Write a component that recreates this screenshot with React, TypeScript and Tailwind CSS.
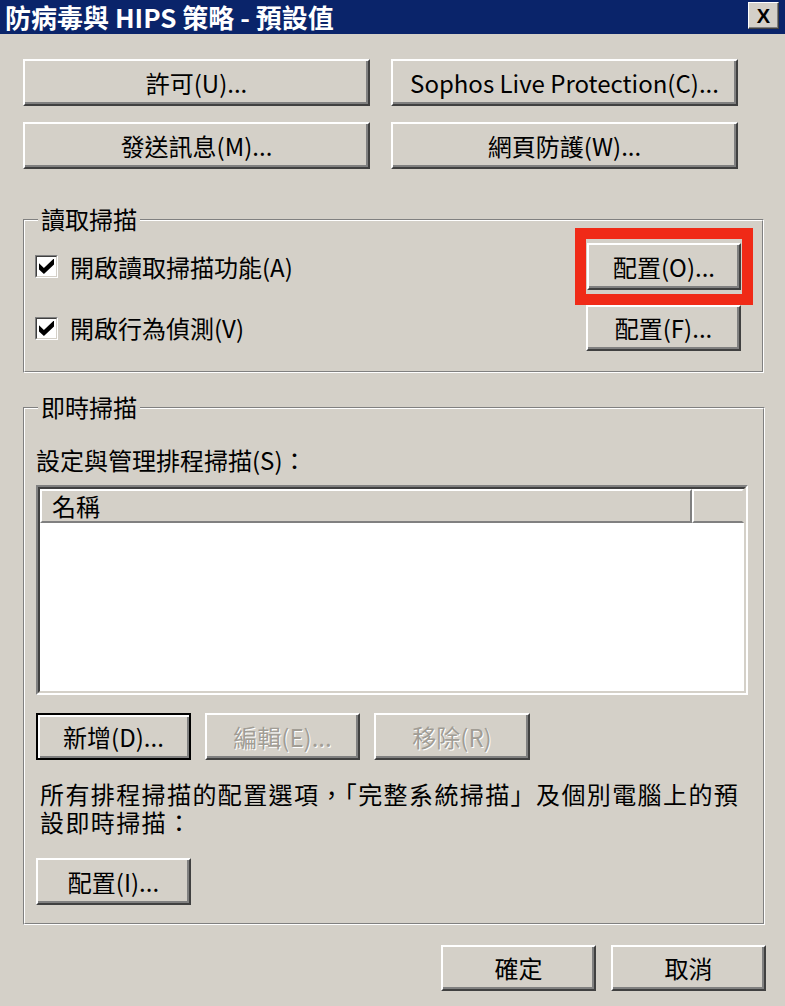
import React from "react";

const FONT = "font-['Noto_Sans_CJK_TC','Noto_Sans_CJK_SC',sans-serif]";

function Btn({
  children,
  className = "",
  disabled = false,
  isDefault = false,
}: {
  children: React.ReactNode;
  className?: string;
  disabled?: boolean;
  isDefault?: boolean;
}) {
  const base = isDefault
    ? "border-2 border-black shadow-[inset_2px_2px_0_#ffffff,inset_-2px_-2px_0_#808080]"
    : "border-2 border-t-white border-l-white border-r-[#404040] border-b-[#404040] shadow-[inset_-2px_-2px_0_#808080]";
  const txt = disabled ? "text-[#a19d95] [text-shadow:1px_1px_0_#ffffff]" : "text-black";
  return (
    <div
      className={`${base} ${txt} bg-[#d4d0c8] flex items-center justify-center text-[24px] leading-none whitespace-nowrap ${className}`}
    >
      {children}
    </div>
  );
}

function Check() {
  return (
    <div className="w-[23px] h-[23px] shrink-0 border border-t-[#808080] border-l-[#808080] border-r-white border-b-white">
      <div className="w-full h-full border border-t-[#404040] border-l-[#404040] border-r-[#d4d0c8] border-b-[#d4d0c8] bg-white flex items-center justify-center">
        <svg width="15" height="15" viewBox="0 0 7 7">
          <path d="M0 2 L2.3 4.2 L7 -0.3 L7 2.6 L2.3 7 L0 4.9 Z" fill="#000" />
        </svg>
      </div>
    </div>
  );
}

function Group({
  label,
  className = "",
  innerClass = "",
  children,
}: {
  label: string;
  className?: string;
  innerClass?: string;
  children: React.ReactNode;
}) {
  return (
    <div
      className={`relative border border-t-[#808080] border-l-[#808080] border-r-white border-b-white ${className}`}
    >
      <div
        className={`border border-t-white border-l-white border-r-[#808080] border-b-[#808080] ${innerClass}`}
      >
        {children}
      </div>
      <div className="absolute left-[14px] top-[-16px] px-[3px] bg-[#d4d0c8] text-[24px] leading-[30px]">
        {label}
      </div>
    </div>
  );
}

export default function App() {
  return (
    <div className={`w-[785px] h-[1006px] bg-[#d4d0c8] overflow-hidden text-black ${FONT}`}>
      {/* Title bar */}
      <div className="h-[34px] bg-[#0a246a] flex items-center justify-between pl-[5px] pr-[6px]">
        <div className="text-white font-bold text-[26px] leading-[32px] whitespace-nowrap">
          防病毒與 HIPS 策略 - 預設值
        </div>
        <div className="self-start mt-[2px] w-[31px] h-[27px] bg-[#d4d0c8] border border-t-white border-l-white border-r-[#404040] border-b-[#404040] shadow-[inset_-1px_-1px_0_#808080] flex items-center justify-center font-bold text-[20px] leading-none font-['Liberation_Sans',sans-serif]">
          X
        </div>
      </div>

      <div className="px-[23px]">
        {/* Top buttons */}
        <div className="mt-[25px] grid grid-cols-[347px_347px] gap-x-[21px] gap-y-[16px]">
          <Btn className="h-[47px]">許可(U)...</Btn>
          <Btn className="h-[47px]">Sophos Live Protection(C)...</Btn>
          <Btn className="h-[47px]">發送訊息(M)...</Btn>
          <Btn className="h-[47px]">網頁防護(W)...</Btn>
        </div>

        {/* 讀取掃描 */}
        <Group
          label="讀取掃描"
          className="mt-[50px] w-[741px]"
          innerClass="pt-[22px] pb-[20px] pl-[10px] pr-[21px] flex flex-col gap-[15px]"
        >
          <div className="flex items-center justify-between">
            <div className="flex items-center gap-[12px] text-[24px] leading-[30px]">
              <Check />
              <span>開啟讀取掃描功能(A)</span>
            </div>
            <div className="relative">
              <Btn className="w-[154px] h-[47px]">配置(O)...</Btn>
              <div className="absolute left-[-12px] right-[-12px] top-[-15px] bottom-[-15px] border-[11px] border-[#f02a17] pointer-events-none" />
            </div>
          </div>
          <div className="flex items-center justify-between">
            <div className="flex items-center gap-[12px] text-[24px] leading-[30px]">
              <Check />
              <span>開啟行為偵測(V)</span>
            </div>
            <Btn className="w-[155px] h-[46px]">配置(F)...</Btn>
          </div>
        </Group>

        {/* 即時掃描 */}
        <Group
          label="即時掃描"
          className="mt-[34px] w-[742px]"
          innerClass="pt-[36px] pb-[18px] pl-[11px] pr-[15px]"
        >
          <div className="text-[24px] leading-[30px]">設定與管理排程掃描(S)：</div>

          {/* List view */}
          <div className="mt-[10px] w-[712px] h-[210px] border-2 border-t-[#808080] border-l-[#808080] border-r-white border-b-white">
            <div className="w-full h-full border-2 border-t-[#404040] border-l-[#404040] border-r-[#d4d0c8] border-b-[#d4d0c8] bg-white flex flex-col">
              <div className="h-[34px] flex bg-[#d4d0c8]">
                <div className="w-[652px] h-full border-2 border-t-white border-l-white border-r-[#808080] border-b-[#808080] flex items-center pl-[10px] text-[24px] leading-none">
                  名稱
                </div>
                <div className="flex-1 h-full border-2 border-t-white border-l-white border-r-[#d4d0c8] border-b-[#808080]" />
              </div>
              <div className="flex-1 bg-white" />
            </div>
          </div>

          {/* Buttons */}
          <div className="mt-[18px] flex gap-[14px]">
            <Btn isDefault className="w-[155px] h-[47px]">新增(D)...</Btn>
            <Btn disabled className="w-[155px] h-[47px]">編輯(E)...</Btn>
            <Btn disabled className="w-[156px] h-[47px]">移除(R)</Btn>
          </div>

          <div className="mt-[20px] pl-[4px] text-[24px] leading-[28px] tracking-[1.4px] whitespace-nowrap">
            <div>所有排程掃描的配置選項，「完整系統掃描」及個別電腦上的預</div>
            <div>設即時掃描：</div>
          </div>

          <Btn className="mt-[22px] w-[155px] h-[47px]">配置(I)...</Btn>
        </Group>
      </div>

      {/* Bottom buttons */}
      <div className="mt-[20px] flex justify-end gap-[15px] pr-[19px]">
        <Btn className="w-[155px] h-[46px]">確定</Btn>
        <Btn className="w-[155px] h-[46px]">取消</Btn>
      </div>
    </div>
  );
}
